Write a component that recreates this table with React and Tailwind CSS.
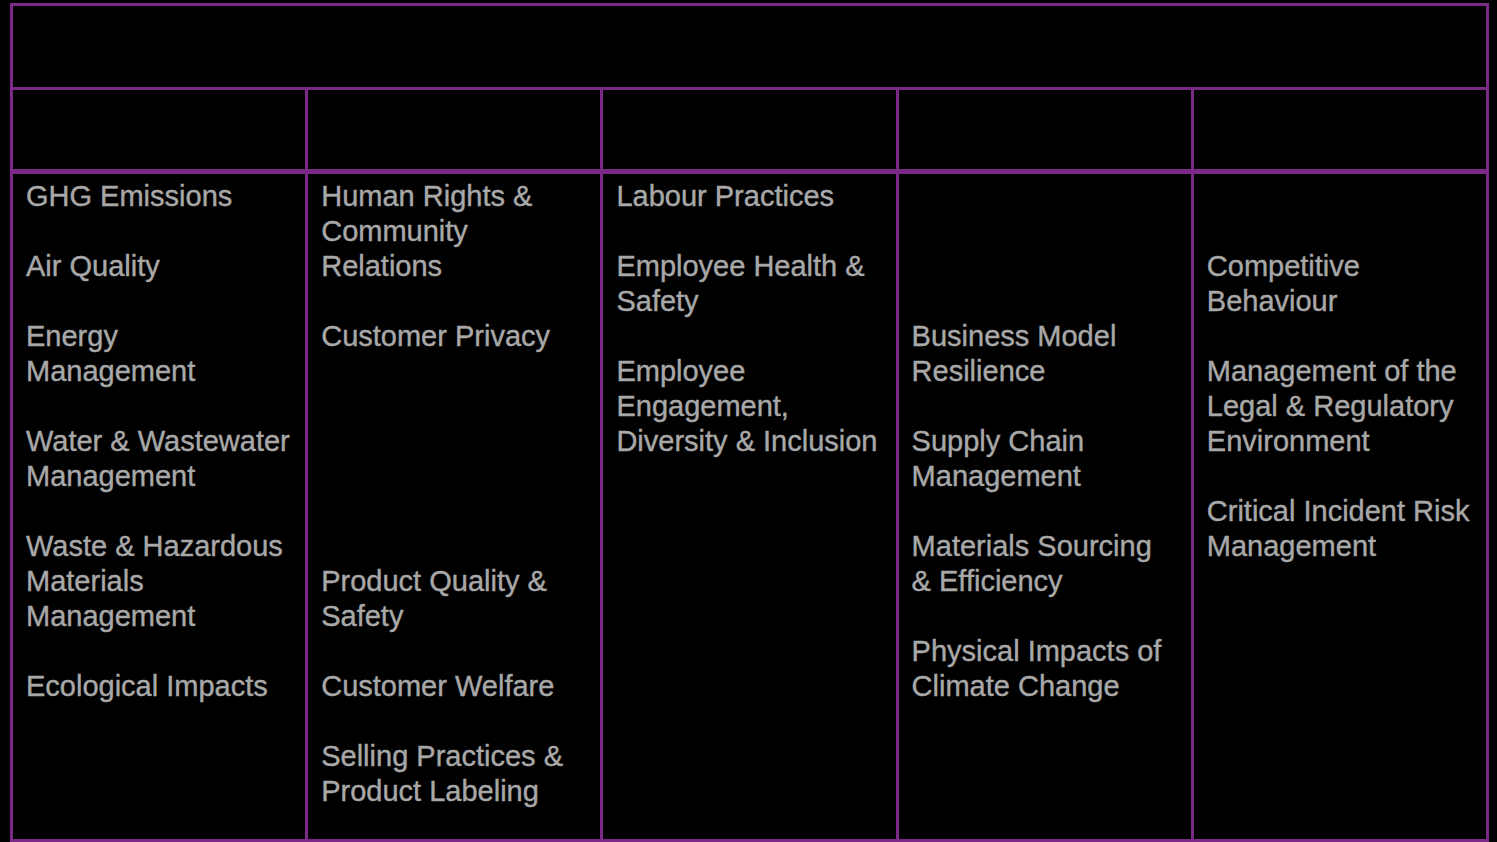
import React from 'react';

// each entry is one 35px text line; '' keeps the empty line between topics
const columns = [
  ['GHG Emissions', '', 'Air Quality', '', 'Energy', 'Management', '', 'Water & Wastewater', 'Management', '', 'Waste & Hazardous', 'Materials', 'Management', '', 'Ecological Impacts'],
  ['Human Rights &', 'Community', 'Relations', '', 'Customer Privacy', '', '', '', '', '', '', 'Product Quality &', 'Safety', '', 'Customer Welfare', '', 'Selling Practices &', 'Product Labeling'],
  ['Labour Practices', '', 'Employee Health &', 'Safety', '', 'Employee', 'Engagement,', 'Diversity & Inclusion'],
  ['', '', '', '', 'Business Model', 'Resilience', '', 'Supply Chain', 'Management', '', 'Materials Sourcing', '& Efficiency', '', 'Physical Impacts of', 'Climate Change'],
  ['', '', 'Competitive', 'Behaviour', '', 'Management of the', 'Legal & Regulatory', 'Environment', '', 'Critical Incident Risk', 'Management'],
];

const App = () => {
  return (
    <div className="w-full h-[842px] bg-black pl-[10px] pr-[8px] pt-[3px] overflow-hidden" style={{ fontFamily: '"Liberation Sans", Arial, sans-serif' }}>
      <div className="h-[839px] border-[3px] border-[#7b2a87] flex flex-col">
        <div className="h-[84px] shrink-0 border-b-[3px] border-[#7b2a87]"></div>
        <div className="h-[84px] shrink-0 flex border-b-[5px] border-[#7b2a87]">
          {columns.map((_, i) => (
            <div key={i} className={`flex-1 ${i > 0 ? 'border-l-[3px] border-[#7b2a87]' : ''}`}></div>
          ))}
        </div>
        <div className="flex-1 flex">
          {columns.map((lines, i) => (
            <div key={i} className={`flex-1 px-[13px] pt-[5px] ${i > 0 ? 'border-l-[3px] border-[#7b2a87]' : ''}`}>
              {lines.map((line, j) => (
                <div key={j} className="h-[35px] leading-[35px] text-[29px] text-[#a8a8a8] whitespace-nowrap [-webkit-text-stroke:0.4px_#a8a8a8]">{line}</div>
              ))}
            </div>
          ))}
        </div>
      </div>
    </div>
  );
};

export default App;
